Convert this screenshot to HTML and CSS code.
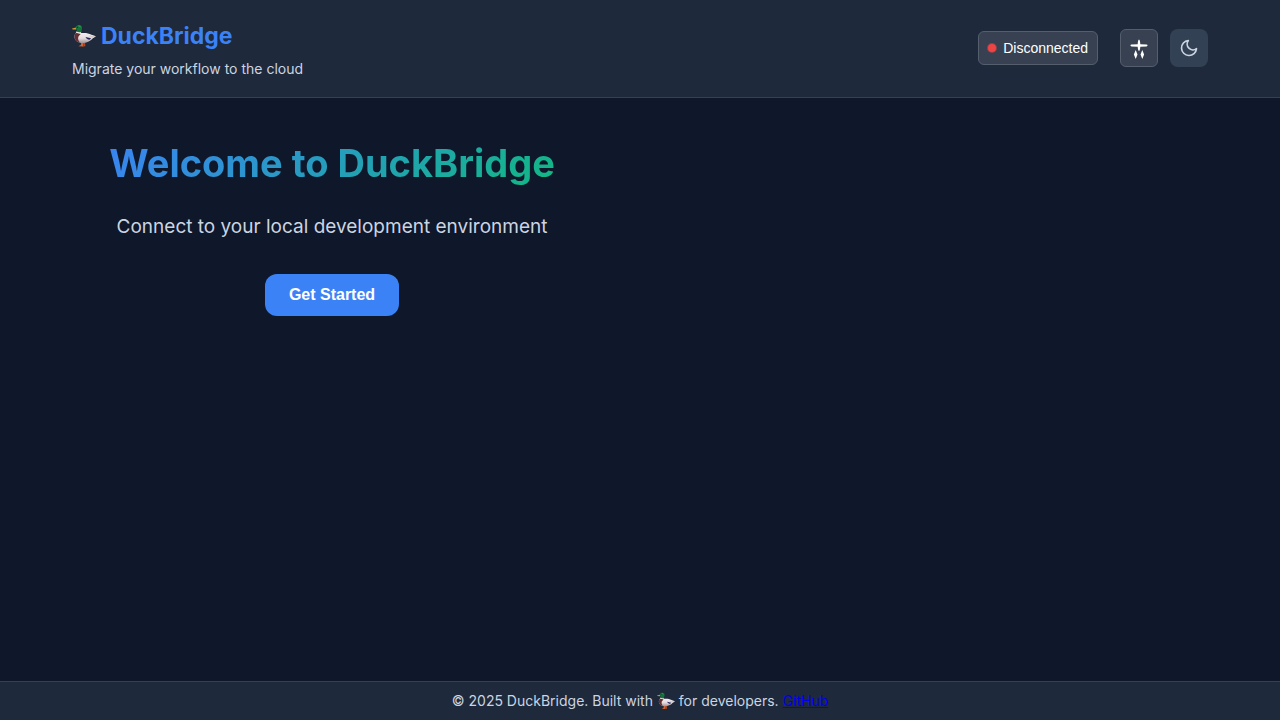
FILE: index.html
```html
<!DOCTYPE html>
<html lang="en">
<head>
<meta charset="utf-8">
<meta name="viewport" content="width=device-width, initial-scale=1">
<title>DuckBridge</title>
<link rel="stylesheet" href="styles.css">
</head>
<body>
<svg class="sprite" aria-hidden="true">
  <defs>
    <linearGradient id="duck-body" x1="0" y1="0" x2="0" y2="1">
      <stop offset="0" stop-color="#f3eef2"/>
      <stop offset="0.55" stop-color="#e3dade"/>
      <stop offset="1" stop-color="#a08f94"/>
    </linearGradient>
  </defs>
  <symbol id="duck" viewBox="0 0 24 24">
    <path d="M9.300 18.500l-.5 2.600-2.500 1.200 5 .3.400-4z" fill="#d9622f"/>
    <path d="M11.500 18.500l.3 2.800-1.600 1.100 3.200-.1-.4-4z" fill="#b9471f"/>
    <path d="M4.200 8.600C2 10.600 1.700 14.500 4.400 17c2.800 2.500 8.200 2.700 11.800.8 2.700-1.400 4.100-2.800 5.600-4.300l2-1.300-2.600-.9c-2.200-.6-4.600-1.900-7.200-2.300-3-.4-5 .5-6.200-.5z" fill="url(#duck-body)"/>
    <path d="M4.200 8.600C2 10.600 1.700 14.500 4.400 17c1.300.9 2.300 1.200 3.300 1.300-1.500-1.800-2-3.600-1.300-5.500.5-1.400 1.600-2.100 2.400-2.900z" fill="#632d32"/>
    <path d="M13.500 13l5.600 1.300-1.600 1.500c-1.700-.2-3-.9-4-2.800z" fill="#25245f"/>
    <path d="M17.500 11.600l6.300.7-2.400 1.600-3.900-.7z" fill="#d9cdc6"/>
    <path d="M4.500 7.200l4.700.4-.2 1.800-5-.3z" fill="#eee9e5"/>
    <path d="M3.900 3.600l-3.700.9c-.3.500 0 .8.500.9l3.500.1z" fill="#d29a2e"/>
    <path d="M3.700 3.300C4.400 1.300 6.100.6 7.800 1c1.900.5 2.600 2 2.200 3.700-.3 1.400-.5 2.100-.8 3.200-1.500.5-3.300.3-4.500-.5.4-1.100.2-1.600-.4-2.200z" fill="#15733a"/>
    <path d="M6 1.700c1.500-.6 2.900.3 2.900 1.700-1.100-.7-2-.9-2.900-1.700z" fill="#2fa454"/>
    <circle cx="5.500" cy="3.200" r=".5" fill="#071b10"/>
  </symbol>
</svg>

<header class="header">
  <div class="container header-content">
    <div class="brand">
      <h1 class="logo"><svg class="duck" role="img" aria-label="Duck"><use href="#duck"/></svg>DuckBridge</h1>
      <p class="tagline">Migrate your workflow to the cloud</p>
    </div>
    <div class="actions">
      <button class="status" type="button"><span class="status-dot"></span>Disconnected</button>
      <div class="toggles">
        <button class="icon-button icon-button-light" type="button" aria-label="Effects">
          <svg width="20" height="20" viewBox="0 0 20 20" fill="#fff" aria-hidden="true">
            <path d="M10 1.500c.8 0 1.200 2.200 1.300 4.700l6.200.4c1.400.1 1.400 1.700 0 1.800l-6.200.4c-.1 2-.5 4.200-1.300 4.200s-1.200-2.200-1.300-4.200l-6.200-.4c-1.400-.1-1.400-1.700 0-1.800l6.200-.4c.1-2.500.5-4.700 1.300-4.700z"/>
            <path d="M6.700 12L8.500 16.500l-1.800 4.500L4.900 16.500zM13.300 12l1.800 4.500-1.800 4.500-1.800-4.500z"/>
          </svg>
        </button>
        <button class="icon-button" type="button" aria-label="Toggle theme">
          <svg width="20" height="20" viewBox="0 0 24 24" fill="none" stroke="currentColor" stroke-width="2" stroke-linecap="round" stroke-linejoin="round" aria-hidden="true">
            <path d="M21 12.800A9 9 0 1 1 11.200 3a7 7 0 0 0 9.800 9.800z"/>
          </svg>
        </button>
      </div>
    </div>
  </div>
</header>

<main class="main">
  <div class="container columns">
    <section class="hero">
      <h2 class="hero-title">Welcome to DuckBridge</h2>
      <p class="hero-text">Connect to your local development environment</p>
      <button class="primary" type="button">Get Started</button>
    </section>
  </div>
</main>

<footer class="footer">
  <p class="footer-text">© 2025 DuckBridge. Built with <svg class="duck duck-small" role="img" aria-label="Duck"><use href="#duck"/></svg> for developers. <a href="#">GitHub</a></p>
</footer>
</body>
</html>
```

FILE: styles.css
```css
* {
  box-sizing: border-box;
  margin: 0;
  padding: 0;
}

body {
  display: flex;
  flex-direction: column;
  min-height: 100vh;
  background: #0f172a;
  color: #f8fafc;
  font-family: Inter, "Liberation Sans", sans-serif;
  line-height: 1.6;
}

button {
  font-family: "Liberation Sans", Arial, sans-serif;
  cursor: pointer;
}

.sprite {
  position: absolute;
  width: 0;
  height: 0;
}

.container {
  width: 100%;
  max-width: 1200px;
  margin: 0 auto;
  padding: 0 32px;
}

.header {
  padding: 16px 0 17px;
  background: #1e293b;
  border-bottom: 1px solid #334155;
}

.header-content {
  display: flex;
  align-items: center;
  justify-content: space-between;
}

.logo {
  display: flex;
  align-items: center;
  gap: 5px;
  color: #3b82f6;
  font-size: 23px;
  font-weight: 700;
  line-height: 40px;
}

.duck {
  width: 24px;
  height: 24px;
}

.duck-small {
  width: 18px;
  height: 18px;
  vertical-align: -4px;
}

.tagline {
  margin-top: 2px;
  color: #cbd5e1;
  font-size: 14px;
  line-height: 22px;
}

.actions {
  display: flex;
  align-items: center;
  gap: 22px;
}

.toggles {
  display: flex;
  gap: 12px;
}

.status {
  display: flex;
  align-items: center;
  gap: 7px;
  height: 34px;
  padding: 0 9px;
  background: #374151;
  border: 1px solid #545e6d;
  border-radius: 6px;
  color: #fff;
  font-size: 14px;
}

.status-dot {
  width: 8px;
  height: 8px;
  border-radius: 50%;
  background: #ef4444;
  box-shadow: 0 0 0 1px #8c424c;
}

.icon-button {
  display: flex;
  align-items: center;
  justify-content: center;
  width: 38px;
  height: 38px;
  background: #334155;
  border: 0;
  border-radius: 8px;
  color: #cbd5e1;
}

.icon-button-light {
  background: #374151;
  border: 1px solid #545e6d;
  border-radius: 6px;
}

.icon-button svg {
  overflow: visible;
}

.main {
  flex: 1;
  padding: 32px 0;
}

.columns {
  display: grid;
  grid-template-columns: 1fr 1fr;
  gap: 96px;
}

.hero {
  text-align: center;
}

.hero-title {
  width: fit-content;
  margin: 0 auto 16px;
  background: linear-gradient(135deg, #3b82f6, #10b981);
  background-clip: text;
  -webkit-background-clip: text;
  color: transparent;
  font-size: 38px;
  font-weight: 700;
  line-height: 66px;
}

.hero-text {
  margin-bottom: 32px;
  color: #cbd5e1;
  font-size: 19px;
  line-height: 30px;
}

.primary {
  height: 42px;
  padding: 0 24px;
  background: #3b82f6;
  border: 0;
  border-radius: 12px;
  color: #fff;
  font-size: 16px;
  font-weight: 700;
}

.footer {
  padding: 8px 32px;
  background: #1e293b;
  border-top: 1px solid #334155;
  text-align: center;
}

.footer-text {
  color: #cbd5e1;
  font-size: 14px;
  line-height: 22px;
}

.footer-text a {
  color: #0000ee;
}
```
